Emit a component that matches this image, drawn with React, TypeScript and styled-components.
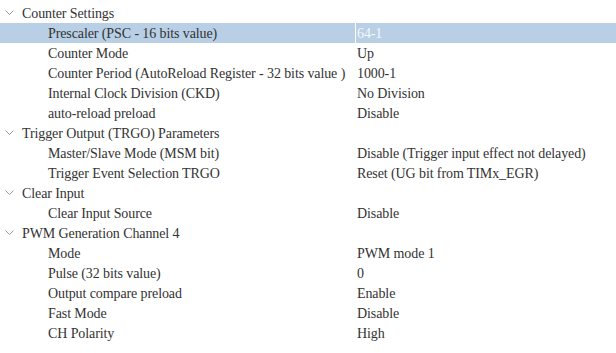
import React from 'react';
import styled, { createGlobalStyle } from 'styled-components';

const GlobalStyle = createGlobalStyle`
  body {
    margin: 0;
    background: #ffffff;
  }
`;

interface Param {
  label: string;
  value: string;
}

interface Group {
  title: string;
  params: Param[];
}

const groups: Group[] = [
  {
    title: 'Counter Settings',
    params: [
      { label: 'Prescaler (PSC - 16 bits value)', value: '64-1' },
      { label: 'Counter Mode', value: 'Up' },
      { label: 'Counter Period (AutoReload Register - 32 bits value )', value: '1000-1' },
      { label: 'Internal Clock Division (CKD)', value: 'No Division' },
      { label: 'auto-reload preload', value: 'Disable' }
    ]
  },
  {
    title: 'Trigger Output (TRGO) Parameters',
    params: [
      { label: 'Master/Slave Mode (MSM bit)', value: 'Disable (Trigger input effect not delayed)' },
      { label: 'Trigger Event Selection TRGO', value: 'Reset (UG bit from TIMx_EGR)' }
    ]
  },
  {
    title: 'Clear Input',
    params: [{ label: 'Clear Input Source', value: 'Disable' }]
  },
  {
    title: 'PWM Generation Channel 4',
    params: [
      { label: 'Mode', value: 'PWM mode 1' },
      { label: 'Pulse (32 bits value)', value: '0' },
      { label: 'Output compare preload', value: 'Enable' },
      { label: 'Fast Mode', value: 'Disable' },
      { label: 'CH Polarity', value: 'High' }
    ]
  }
];

const Tree = styled.div`
  width: 616px;
  padding-top: 3px;
  font-family: "Liberation Serif", serif;
  font-size: 14px;
  letter-spacing: -0.1px;
  color: #333333;
`;

const GroupRow = styled.div`
  display: flex;
  align-items: center;
  height: 20px;
`;

const GroupTitle = styled.span`
  padding-top: 1px;
`;

const Chevron = styled.svg`
  width: 9px;
  height: 6px;
  margin: 0 8px 0 5px;
  flex-shrink: 0;
`;

const ParamRow = styled.div<{ $selected?: boolean }>`
  display: grid;
  grid-template-columns: 355px 1px 1fr;
  height: 20px;
  align-items: center;
  background: ${p => (p.$selected ? '#b8cfe5' : 'transparent')};
`;

const Label = styled.span`
  padding: 1px 0 0 48px;
  white-space: nowrap;
`;

const Divider = styled.span<{ $selected?: boolean }>`
  height: 100%;
  background: ${p => (p.$selected ? '#ffffff' : 'transparent')};
`;

const Value = styled.span<{ $selected?: boolean }>`
  padding: 1px 0 0 1px;
  white-space: nowrap;
  color: ${p => (p.$selected ? '#f5f7fa' : '#333333')};
`;

export default function App() {
  return (
    <>
      <GlobalStyle />
      <Tree>
        {groups.map((g, gi) => (
          <React.Fragment key={g.title}>
            <GroupRow>
              <Chevron viewBox="0 0 9 6">
                <path d="M0.5 0.5 L4.5 4.5 L8.5 0.5" fill="none" stroke="#9a9a9a" strokeWidth="1" />
              </Chevron>
              <GroupTitle>{g.title}</GroupTitle>
            </GroupRow>
            {g.params.map((p, pi) => {
              const sel = gi === 0 && pi === 0;
              return (
                <ParamRow key={p.label} $selected={sel}>
                  <Label>{p.label}</Label>
                  <Divider $selected={sel} />
                  <Value $selected={sel}>{p.value}</Value>
                </ParamRow>
              );
            })}
          </React.Fragment>
        ))}
      </Tree>
    </>
  );
}
